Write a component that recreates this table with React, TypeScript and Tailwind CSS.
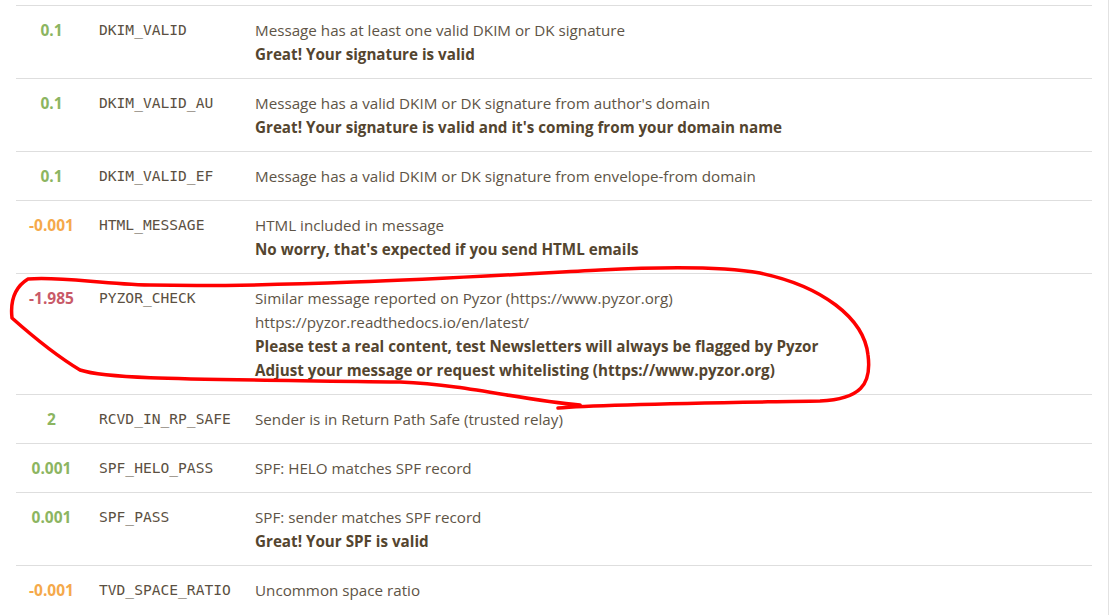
import React from "react";

type Row = {
  score: string;
  color: string;
  name: string;
  lines: { text: string; bold?: boolean }[];
};

const GREEN = "text-[#8cb561]";
const ORANGE = "text-[#f5a94a]";
const RED = "text-[#c95a68]";

const rows: Row[] = [
  {
    score: "0.1",
    color: GREEN,
    name: "DKIM_VALID",
    lines: [
      { text: "Message has at least one valid DKIM or DK signature" },
      { text: "Great! Your signature is valid", bold: true },
    ],
  },
  {
    score: "0.1",
    color: GREEN,
    name: "DKIM_VALID_AU",
    lines: [
      { text: "Message has a valid DKIM or DK signature from author's domain" },
      { text: "Great! Your signature is valid and it's coming from your domain name", bold: true },
    ],
  },
  {
    score: "0.1",
    color: GREEN,
    name: "DKIM_VALID_EF",
    lines: [{ text: "Message has a valid DKIM or DK signature from envelope-from domain" }],
  },
  {
    score: "-0.001",
    color: ORANGE,
    name: "HTML_MESSAGE",
    lines: [
      { text: "HTML included in message" },
      { text: "No worry, that's expected if you send HTML emails", bold: true },
    ],
  },
  {
    score: "-1.985",
    color: RED,
    name: "PYZOR_CHECK",
    lines: [
      { text: "Similar message reported on Pyzor (https://www.pyzor.org)" },
      { text: "https://pyzor.readthedocs.io/en/latest/" },
      { text: "Please test a real content, test Newsletters will always be flagged by Pyzor", bold: true },
      { text: "Adjust your message or request whitelisting (https://www.pyzor.org)", bold: true },
    ],
  },
  {
    score: "2",
    color: GREEN,
    name: "RCVD_IN_RP_SAFE",
    lines: [{ text: "Sender is in Return Path Safe (trusted relay)" }],
  },
  {
    score: "0.001",
    color: GREEN,
    name: "SPF_HELO_PASS",
    lines: [{ text: "SPF: HELO matches SPF record" }],
  },
  {
    score: "0.001",
    color: GREEN,
    name: "SPF_PASS",
    lines: [
      { text: "SPF: sender matches SPF record" },
      { text: "Great! Your SPF is valid", bold: true },
    ],
  },
  {
    score: "-0.001",
    color: ORANGE,
    name: "TVD_SPACE_RATIO",
    lines: [{ text: "Uncommon space ratio" }],
  },
];

export default function App() {
  return (
    <div className="relative w-[1116px] h-[615px] overflow-hidden bg-white flex font-['Open_Sans',sans-serif] text-[#5e5446]">
      <div className="w-[1092px] pl-[16px] pt-[5px]">
        {rows.map((r, i) => (
          <div key={i} className="flex border-t border-[#dedede] leading-[24px]">
            <div className={`w-[71px] shrink-0 py-[12px] text-center font-bold text-[15.5px] ${r.color}`}>
              {r.score}
            </div>
            <div className="w-[156px] shrink-0 px-[12px] py-[12px] font-['DejaVu_Sans_Mono',monospace] text-[14.6px] text-[#5b5042]">
              {r.name}
            </div>
            <div className="flex-1 px-[12px] py-[12px] text-[15.2px]">
              {r.lines.map((l, j) => (
                <div key={j} className={l.bold ? "font-bold text-[#54452f]" : ""}>
                  {l.text}
                </div>
              ))}
            </div>
          </div>
        ))}
      </div>
      <div className="ml-[16px] w-px h-full bg-[#e2e2e2]" />
      <svg
        className="absolute left-0 top-0 pointer-events-none"
        width="1116"
        height="615"
        viewBox="0 0 1116 615"
      >
        <path
          d="M 558 408 C 600 404, 700 403, 820 401 C 860 399, 872 385, 868 355 C 864 318, 822 286, 760 273 C 720 266, 660 267, 600 270 C 500 275, 300 288, 150 285 C 100 284, 60 276, 28 279 C 15 287, 10 300, 12 318 C 30 334, 55 355, 80 370 C 110 380, 200 379, 400 382 C 470 385, 520 400, 580 405"
          fill="none"
          stroke="#ff0000"
          strokeWidth="3.5"
          strokeLinecap="round"
          strokeLinejoin="round"
        />
      </svg>
    </div>
  );
}
